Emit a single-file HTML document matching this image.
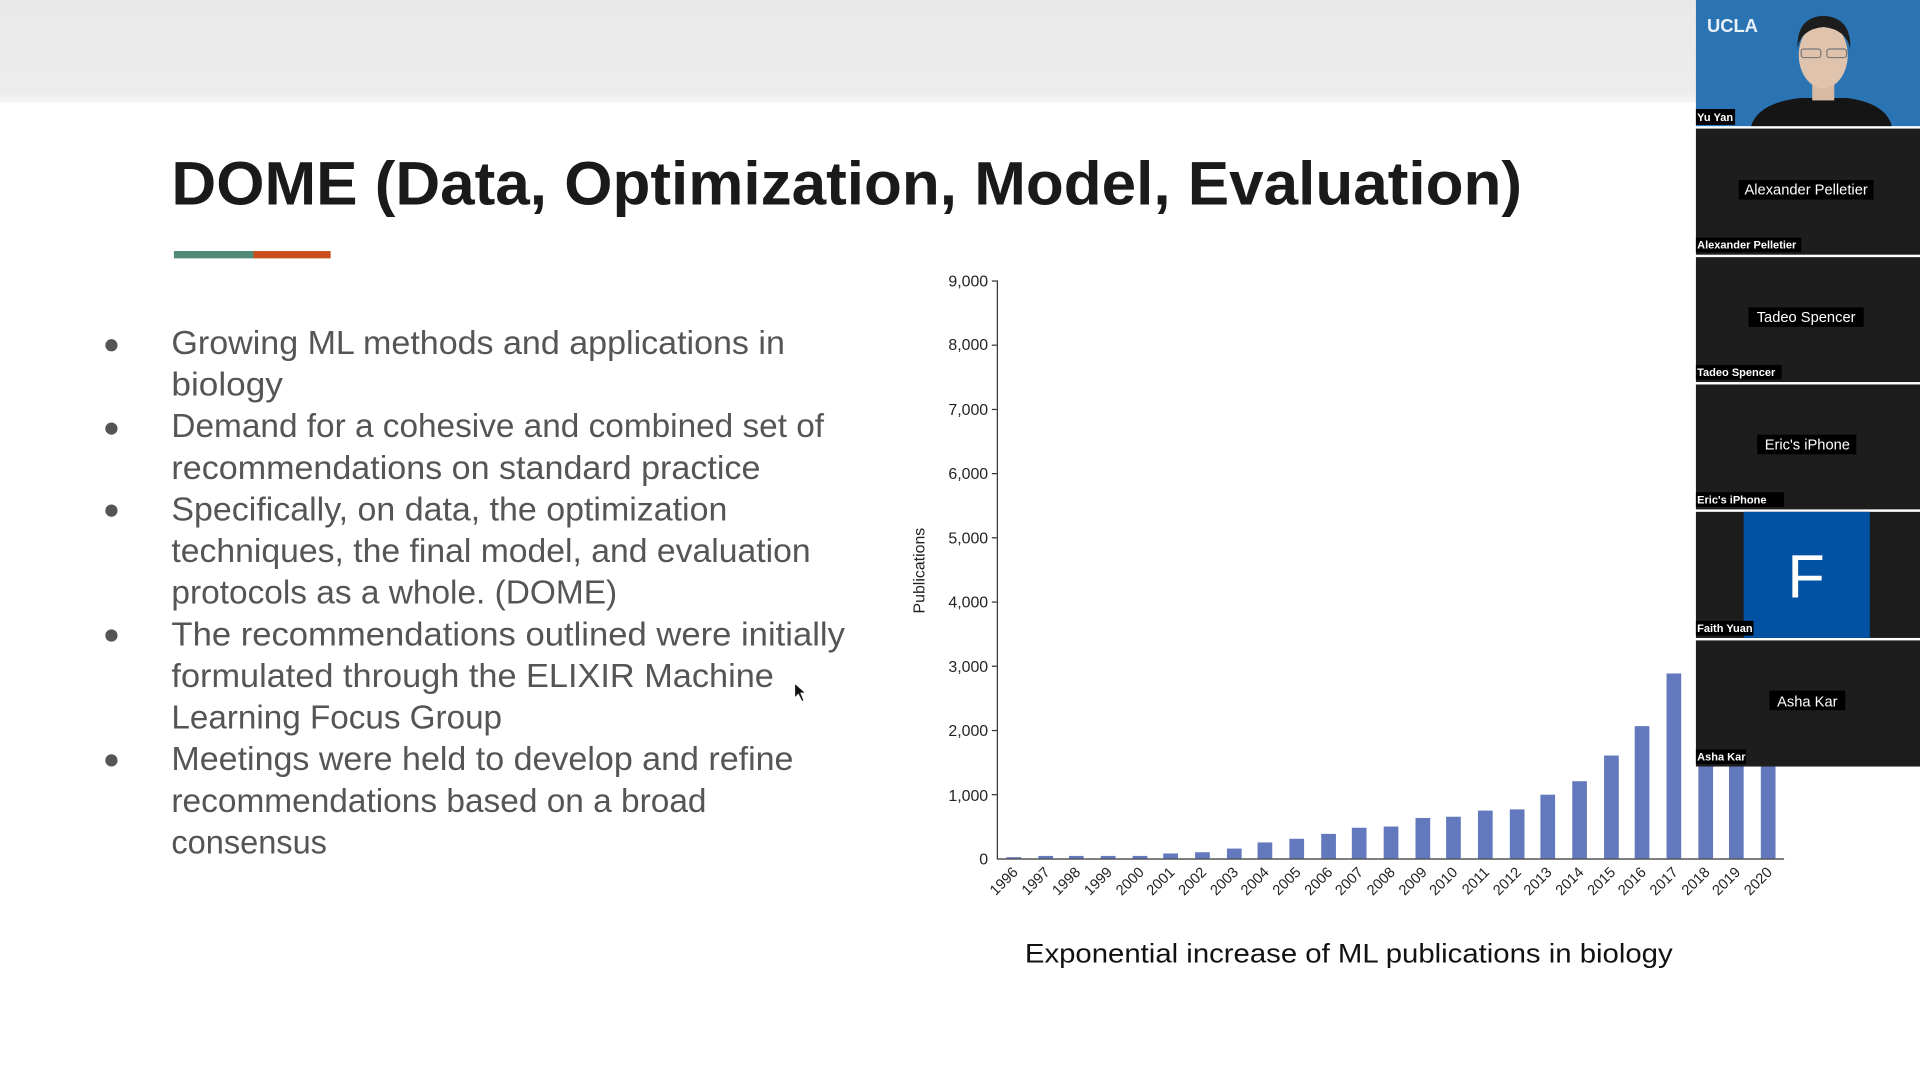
<!DOCTYPE html>
<html><head><meta charset="utf-8"><style>
html,body{margin:0;padding:0;width:1920px;height:1080px;overflow:hidden;background:#fff}
svg{display:block}
</style></head><body>
<svg width="1920" height="1080" viewBox="0 0 1568 882" preserveAspectRatio="none" xmlns="http://www.w3.org/2000/svg" font-family="Liberation Sans, Arial, sans-serif">
<defs>
<linearGradient id="g" x1="0" y1="0" x2="0" y2="1"><stop offset="0" stop-color="#e9e9e9"/><stop offset="0.9" stop-color="#ececec"/><stop offset="1" stop-color="#f7f7f7"/></linearGradient>
</defs>
<rect x="0" y="0" width="1568" height="882" fill="#fff"/>
<rect x="0" y="0" width="1568" height="84" fill="url(#g)"/>
<!-- title -->
<text x="140" y="167" font-size="50" font-weight="bold" fill="#1a1a1a" textLength="1103" lengthAdjust="spacingAndGlyphs">DOME (Data, Optimization, Model, Evaluation)</text>
<rect x="142" y="205" width="65" height="6" fill="#4f8b78"/>
<rect x="207" y="205" width="63" height="6" fill="#c9501c"/>
<!-- bullets -->
<g fill="#555" font-size="27">
<circle cx="91" cy="282" r="5"/><circle cx="91" cy="350" r="5"/><circle cx="91" cy="417" r="5"/><circle cx="91" cy="519" r="5"/><circle cx="91" cy="621" r="5"/>
<text x="140" y="289" textLength="501" lengthAdjust="spacingAndGlyphs">Growing ML methods and applications in</text>
<text x="140" y="323" textLength="91" lengthAdjust="spacingAndGlyphs">biology</text>
<text x="140" y="357" textLength="533" lengthAdjust="spacingAndGlyphs">Demand for a cohesive and combined set of</text>
<text x="140" y="391" textLength="481" lengthAdjust="spacingAndGlyphs">recommendations on standard practice</text>
<text x="140" y="425" textLength="454" lengthAdjust="spacingAndGlyphs">Specifically, on data, the optimization</text>
<text x="140" y="459" textLength="522" lengthAdjust="spacingAndGlyphs">techniques, the final model, and evaluation</text>
<text x="140" y="493" textLength="364" lengthAdjust="spacingAndGlyphs">protocols as a whole. (DOME)</text>
<text x="140" y="527" textLength="550" lengthAdjust="spacingAndGlyphs">The recommendations outlined were initially</text>
<text x="140" y="561" textLength="492" lengthAdjust="spacingAndGlyphs">formulated through the ELIXIR Machine</text>
<text x="140" y="595" textLength="270" lengthAdjust="spacingAndGlyphs">Learning Focus Group</text>
<text x="140" y="629" textLength="508" lengthAdjust="spacingAndGlyphs">Meetings were held to develop and refine</text>
<text x="140" y="663" textLength="437" lengthAdjust="spacingAndGlyphs">recommendations based on a broad</text>
<text x="140" y="697" textLength="127" lengthAdjust="spacingAndGlyphs">consensus</text>
</g>
<!-- cursor -->
<path d="M649 558 L649 570 L652 567 L655 573 L656.5 572 L654 566 L658 566 Z" fill="#111" stroke="#fff" stroke-width="0.7"/>
<!-- chart -->
<g stroke="#333" stroke-width="1" fill="none">
<line x1="814.5" y1="229" x2="814.5" y2="701"/>
<line x1="814" y1="701.5" x2="1457" y2="701.5"/>
<line x1="810" y1="229.5" x2="814" y2="229.5"/><line x1="810" y1="281.9" x2="814" y2="281.9"/><line x1="810" y1="334.4" x2="814" y2="334.4"/><line x1="810" y1="386.8" x2="814" y2="386.8"/><line x1="810" y1="439.2" x2="814" y2="439.2"/><line x1="810" y1="491.7" x2="814" y2="491.7"/><line x1="810" y1="544.1" x2="814" y2="544.1"/><line x1="810" y1="596.6" x2="814" y2="596.6"/><line x1="810" y1="649" x2="814" y2="649"/>
</g>
<g font-size="13" fill="#222" text-anchor="end">
<text x="807" y="234">9,000</text><text x="807" y="286">8,000</text><text x="807" y="339">7,000</text><text x="807" y="391">6,000</text><text x="807" y="444">5,000</text><text x="807" y="496">4,000</text><text x="807" y="549">3,000</text><text x="807" y="601">2,000</text><text x="807" y="654">1,000</text><text x="807" y="706">0</text>
</g>
<text transform="translate(755,466) rotate(-90)" font-size="13" fill="#222" text-anchor="middle">Publications</text>
<g fill="#6279bd">
<rect x="822" y="700" width="12" height="1"/>
<rect x="848" y="699" width="12" height="2"/>
<rect x="873" y="699" width="12" height="2"/>
<rect x="899" y="699" width="12" height="2"/>
<rect x="925" y="699" width="12" height="2"/>
<rect x="950" y="697" width="12" height="4"/>
<rect x="976" y="696" width="12" height="5"/>
<rect x="1002" y="693" width="12" height="8"/>
<rect x="1027" y="688" width="12" height="13"/>
<rect x="1053" y="685" width="12" height="16"/>
<rect x="1079" y="681" width="12" height="20"/>
<rect x="1104" y="676" width="12" height="25"/>
<rect x="1130" y="675" width="12" height="26"/>
<rect x="1156" y="668" width="12" height="33"/>
<rect x="1181" y="667" width="12" height="34"/>
<rect x="1207" y="662" width="12" height="39"/>
<rect x="1233" y="661" width="12" height="40"/>
<rect x="1258" y="649" width="12" height="52"/>
<rect x="1284" y="638" width="12" height="63"/>
<rect x="1310" y="617" width="12" height="84"/>
<rect x="1335" y="593" width="12" height="108"/>
<rect x="1361" y="550" width="12" height="151"/>
<rect x="1387" y="500" width="12" height="201"/>
<rect x="1412" y="450" width="12" height="251"/>
<rect x="1438" y="400" width="12" height="301"/>
</g>
<g font-size="12" fill="#222" text-anchor="end">
<text transform="translate(832,713) rotate(-45)">1996</text>
<text transform="translate(858,713) rotate(-45)">1997</text>
<text transform="translate(883,713) rotate(-45)">1998</text>
<text transform="translate(909,713) rotate(-45)">1999</text>
<text transform="translate(935,713) rotate(-45)">2000</text>
<text transform="translate(960,713) rotate(-45)">2001</text>
<text transform="translate(986,713) rotate(-45)">2002</text>
<text transform="translate(1012,713) rotate(-45)">2003</text>
<text transform="translate(1037,713) rotate(-45)">2004</text>
<text transform="translate(1063,713) rotate(-45)">2005</text>
<text transform="translate(1089,713) rotate(-45)">2006</text>
<text transform="translate(1114,713) rotate(-45)">2007</text>
<text transform="translate(1140,713) rotate(-45)">2008</text>
<text transform="translate(1166,713) rotate(-45)">2009</text>
<text transform="translate(1191,713) rotate(-45)">2010</text>
<text transform="translate(1217,713) rotate(-45)">2011</text>
<text transform="translate(1243,713) rotate(-45)">2012</text>
<text transform="translate(1268,713) rotate(-45)">2013</text>
<text transform="translate(1294,713) rotate(-45)">2014</text>
<text transform="translate(1320,713) rotate(-45)">2015</text>
<text transform="translate(1345,713) rotate(-45)">2016</text>
<text transform="translate(1371,713) rotate(-45)">2017</text>
<text transform="translate(1397,713) rotate(-45)">2018</text>
<text transform="translate(1422,713) rotate(-45)">2019</text>
<text transform="translate(1448,713) rotate(-45)">2020</text>
</g>
<text x="837" y="786" font-size="22" fill="#111" textLength="529" lengthAdjust="spacingAndGlyphs">Exponential increase of ML publications in biology</text>
<!-- video tiles -->
<rect x="1385" y="0" width="183" height="626" fill="#fff"/>
<rect x="1385" y="0" width="183" height="103" fill="#2b74b4"/>
<text x="1394" y="26" font-size="15" font-weight="bold" fill="#e8f0f8">UCLA</text>
<path d="M1430 103 Q1436 84 1470 80 L1508 80 Q1540 84 1545 103 Z" fill="#151515"/>
<rect x="1480" y="66" width="18" height="16" fill="#d8b9a4"/>
<ellipse cx="1489" cy="45" rx="20" ry="27" fill="#e0c3ad"/>
<path d="M1468 40 Q1467 14 1489 13 Q1512 14 1511 40 Q1508 24 1489 22 Q1470 24 1468 40 Z" fill="#1d1d1d"/>
<rect x="1471" y="40" width="16" height="7" rx="2" fill="none" stroke="#777" stroke-width="1"/>
<rect x="1492" y="40" width="16" height="7" rx="2" fill="none" stroke="#777" stroke-width="1"/>
<rect x="1385" y="89" width="32" height="13" fill="#000"/>
<text x="1386" y="99" font-size="9" font-weight="bold" fill="#fff">Yu Yan</text>

<rect x="1385" y="105" width="183" height="103" fill="#1d1d1d"/>
<rect x="1420" y="147" width="110" height="16" fill="#000"/>
<text x="1475" y="159" font-size="12" fill="#fff" text-anchor="middle">Alexander Pelletier</text>
<rect x="1385" y="194" width="86" height="12" fill="#000"/>
<text x="1386" y="203" font-size="9" font-weight="bold" fill="#fff">Alexander Pelletier</text>

<rect x="1385" y="210" width="183" height="102" fill="#1d1d1d"/>
<rect x="1428" y="251" width="94" height="16" fill="#000"/>
<text x="1475" y="263" font-size="12" fill="#fff" text-anchor="middle">Tadeo Spencer</text>
<rect x="1385" y="298" width="70" height="12" fill="#000"/>
<text x="1386" y="307" font-size="9" font-weight="bold" fill="#fff">Tadeo Spencer</text>

<rect x="1385" y="314" width="183" height="102" fill="#1d1d1d"/>
<rect x="1435" y="355" width="81" height="16" fill="#000"/>
<text x="1476" y="367" font-size="12" fill="#fff" text-anchor="middle">Eric's iPhone</text>
<rect x="1385" y="402" width="72" height="12" fill="#000"/>
<text x="1386" y="411" font-size="9" font-weight="bold" fill="#fff">Eric's iPhone</text>

<rect x="1385" y="418" width="183" height="103" fill="#1d1d1d"/>
<rect x="1424" y="418" width="103" height="103" fill="#0251a2"/>
<text x="1475" y="488" font-size="50" fill="#fff" text-anchor="middle">F</text>
<rect x="1385" y="507" width="47" height="12" fill="#000"/>
<text x="1386" y="516" font-size="9" font-weight="bold" fill="#fff">Faith Yuan</text>

<rect x="1385" y="523" width="183" height="103" fill="#1d1d1d"/>
<rect x="1445" y="564" width="62" height="16" fill="#000"/>
<text x="1476" y="577" font-size="12" fill="#fff" text-anchor="middle">Asha Kar</text>
<rect x="1385" y="612" width="41" height="12" fill="#000"/>
<text x="1386" y="621" font-size="9" font-weight="bold" fill="#fff">Asha Kar</text>
</svg>
</body></html>
